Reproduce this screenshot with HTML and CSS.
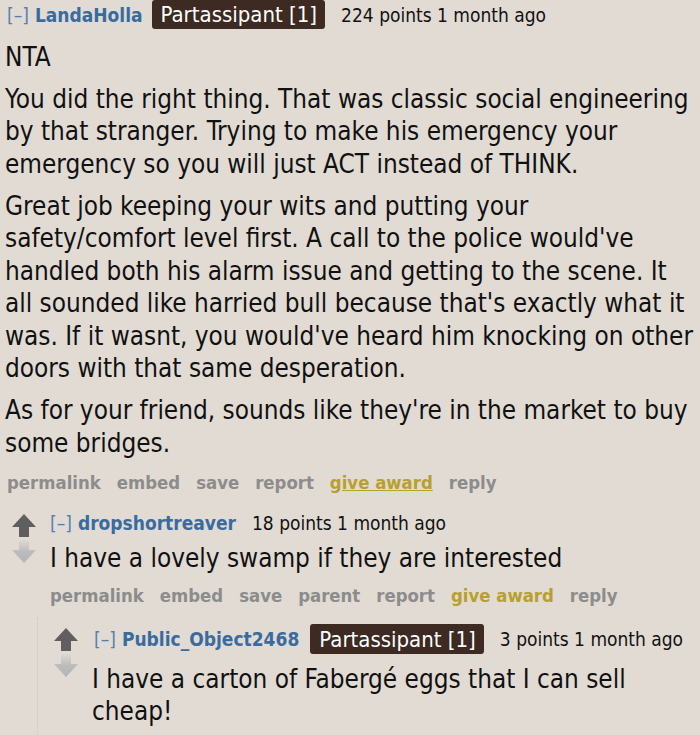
FILE: index.html
```html
<!DOCTYPE html>
<html>
<head>
<meta charset="utf-8">
<link rel="stylesheet" href="styles.css">
</head>
<body>
<svg class="defs" width="0" height="0">
  <defs>
    <linearGradient id="downfade" x1="0" y1="0" x2="0" y2="1">
      <stop offset="0" stop-color="#dcd8d3"/>
      <stop offset="0.5" stop-color="#bcbcbc"/>
      <stop offset="1" stop-color="#b4b4b4"/>
    </linearGradient>
  </defs>
</svg>
<div class="thread">
  <div class="comment top">
    <div class="entry">
      <p class="tagline">
        <a class="expand">[–]</a>
        <a class="author">LandaHolla</a>
        <span class="flair">Partassipant [1]</span>
        <span class="score">224 points 1 month ago</span>
      </p>
      <div class="md">
        <p>NTA</p>
        <p>You did the right thing. That was classic social engineering by that stranger. Trying to make his emergency your emergency so you will just ACT instead of THINK.</p>
        <p>Great job keeping your wits and putting your safety/comfort level first. A call to the police would've handled both his alarm issue and getting to the scene. It all sounded like harried bull because that's exactly what it was. If it wasnt, you would've heard him knocking on other doors with that same desperation.</p>
        <p>As for your friend, sounds like they're in the market to buy some bridges.</p>
      </div>
      <ul class="buttons">
        <li>permalink</li><li>embed</li><li>save</li><li>report</li><li class="award">give award</li><li>reply</li>
      </ul>
    </div>
  </div>

  <div class="comment second">
    <div class="row">
      <div class="votes">
        <svg class="arrow up" viewBox="0 0 24 23"><path d="M12 0 L24 13 L17 13 L17 23 L7 23 L7 13 L0 13 Z"/></svg>
        <svg class="arrow down" viewBox="0 0 24 23"><path fill="url(#downfade)" d="M7 0 L17 0 L17 10 L24 10 L12 23 L0 10 L7 10 Z"/></svg>
      </div>
      <div class="entry">
        <p class="tagline">
          <a class="expand">[–]</a>
          <a class="author">dropshortreaver</a>
          <span class="score">18 points 1 month ago</span>
        </p>
        <div class="md">
          <p>I have a lovely swamp if they are interested</p>
        </div>
        <ul class="buttons">
          <li>permalink</li><li>embed</li><li>save</li><li>parent</li><li>report</li><li class="award plain">give award</li><li>reply</li>
        </ul>
      </div>
    </div>
    <div class="child">
      <div class="comment third">
        <div class="row">
          <div class="votes">
            <svg class="arrow up" viewBox="0 0 24 23"><path d="M12 0 L24 13 L17 13 L17 23 L7 23 L7 13 L0 13 Z"/></svg>
            <svg class="arrow down" viewBox="0 0 24 23"><path fill="url(#downfade)" d="M7 0 L17 0 L17 10 L24 10 L12 23 L0 10 L7 10 Z"/></svg>
          </div>
          <div class="entry">
            <p class="tagline">
              <a class="expand">[–]</a>
              <a class="author">Public_Object2468</a>
              <span class="flair">Partassipant [1]</span>
              <span class="score">3 points 1 month ago</span>
            </p>
            <div class="md">
              <p>I have a carton of Fabergé eggs that I can sell cheap!</p>
            </div>
          </div>
        </div>
      </div>
    </div>
  </div>
</div>
</body>
</html>
```

FILE: styles.css
```css
html, body {
  margin: 0;
  padding: 0;
  background: #e1dbd4;
}
body {
  font-family: "DejaVu Sans Condensed", "DejaVu Sans", sans-serif;
  color: #111;
  height: 735px;
  overflow: hidden;
}
.defs {
  position: absolute;
}
.thread {
  padding: 0 2px 0 5px;
}
p { margin: 0; }
.tagline {
  display: flex;
  align-items: center;
  font-size: 19px;
  white-space: nowrap;
}
.expand {
  color: #5580b0;
  font-weight: normal;
  margin-right: 6px;
}
.author {
  color: #3a6b9f;
  font-weight: bold;
}
.flair {
  background: #3d2a22;
  color: #fff;
  font-size: 22px;
  line-height: 25px;
  padding: 2px 8px 2px 9px;
  border-radius: 3px;
  margin-left: 9px;
}
.score {
  margin-left: 16px;
  color: #111;
}
.top .tagline {
  padding: 0 0 2px 2px;
  height: 29px;
}
.md {
  font-size: 25.9px;
  line-height: 32.5px;
}
.md p {
  margin-top: 9.5px;
}
.buttons {
  list-style: none;
  margin: 0;
  padding: 0;
  display: flex;
  gap: 16px;
  font-size: 18.4px;
  font-weight: bold;
  color: #8c8c8c;
  line-height: 24px;
}
.top .buttons {
  padding: 12px 0 0 2px;
}
.buttons .award {
  color: #b8a02e;
  text-decoration: underline;
}
.buttons .award.plain {
  text-decoration: none;
}
.row {
  display: flex;
}
.votes {
  width: 24px;
  display: flex;
  flex-direction: column;
  gap: 3px;
}
.arrow {
  width: 24px;
  height: 23px;
  display: block;
}
.arrow.up { fill: #5f5f5f; }
.second {
  margin-top: 17px;
  margin-left: 7px;
}
.second .votes {
  margin-right: 14px;
  padding-top: 2px;
}
.second .md p { margin-top: 8px; }
.second .buttons {
  padding-top: 9px;
}
.child {
  margin-left: 25px;
  margin-top: 10px;
  border-left: 1px dotted #c3c9dc;
  padding-left: 16px;
  padding-top: 6px;
  padding-bottom: 40px;
}
.third .votes {
  margin-right: 14px;
  padding-top: 4px;
}
.third .tagline .expand { margin-left: 2px; }
.third .md p { margin-top: 9px; }
.third .flair {
  padding-top: 3px;
  padding-bottom: 2px;
  margin-left: 11px;
}
```
